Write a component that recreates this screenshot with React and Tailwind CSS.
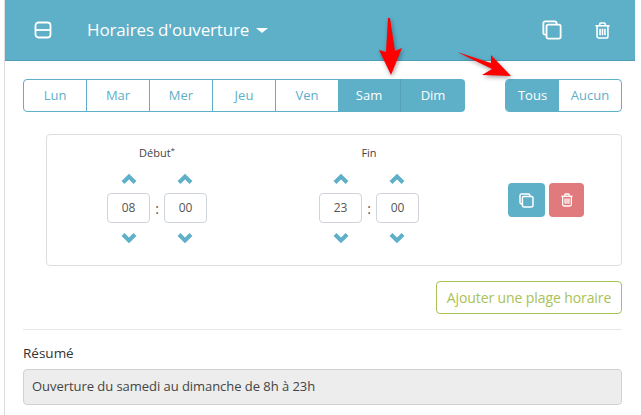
import React from "react"

const teal = "#5eafc8"

function Chevron({ up }) {
  return (
    <svg width="16" height="12" viewBox="0 0 16 12" className="block">
      <path
        d={up ? "M2 9.5 L8 3.5 L14 9.5" : "M2 2.5 L8 8.5 L14 2.5"}
        fill="none"
        stroke={teal}
        strokeWidth="4"
      />
    </svg>
  )
}

function CopyIcon({ size = 20, stroke = 2 }) {
  return (
    <svg width={size} height={size} viewBox="0 0 22 22" fill="none" stroke="#fff" strokeWidth={stroke}>
      <path d="M5 16 H3.5 A2 2 0 0 1 1.5 14 V3.5 A2 2 0 0 1 3.5 1.5 H14 A2 2 0 0 1 16 3.5 V5" />
      <rect x="5" y="5" width="15.5" height="15.5" rx="2" />
    </svg>
  )
}

function TrashIcon({ w = 15, h = 17 }) {
  return (
    <svg width={w} height={h} viewBox="0 0 16 18" fill="none" stroke="#fff" strokeWidth="1.7">
      <path d="M0.5 4 H15.5" />
      <path d="M5 4 V2.2 A1.2 1.2 0 0 1 6.2 1 H9.8 A1.2 1.2 0 0 1 11 2.2 V4" />
      <path d="M2.2 4 V15 A2 2 0 0 0 4.2 17 H11.8 A2 2 0 0 0 13.8 15 V4" />
      <path d="M5.4 7 V14 M8 7 V14 M10.6 7 V14" />
    </svg>
  )
}

function TimeBox({ value }) {
  return (
    <div className="w-[43px] h-[30px] flex items-center justify-center border border-[#cfd4da] rounded-[4px] text-[12px] text-[#555]">
      {value}
    </div>
  )
}

function TimePicker({ label, star, hours, minutes }) {
  return (
    <div className="w-[100px] flex flex-col items-center">
      <div className="h-[18px] text-[11px] leading-[18px] text-[#444]">
        {label}
        {star && <sup className="text-[8px]">*</sup>}
      </div>
      <div className="mt-[11px] w-full flex justify-between px-[14px]">
        <Chevron up />
        <Chevron up />
      </div>
      <div className="mt-[8px] w-full flex items-center justify-between">
        <TimeBox value={hours} />
        <span className="text-[14px] text-[#555]">:</span>
        <TimeBox value={minutes} />
      </div>
      <div className="mt-[9px] w-full flex justify-between px-[14px]">
        <Chevron />
        <Chevron />
      </div>
    </div>
  )
}

export default function App() {
  const days = ["Lun", "Mar", "Mer", "Jeu", "Ven"]

  return (
    <div className="relative w-[641px] h-[415px] overflow-hidden bg-white font-['Open_Sans',sans-serif]">
      <div className="ml-[4px] w-[631px] h-[415px] border-l border-[#dcdcdc]">
        {/* Header */}
        <div className="h-[61px] bg-[#5eafc8] border-b border-[#4f9db6] flex items-center text-white">
          <svg width="18" height="18" viewBox="0 0 18 18" fill="none" stroke="#fff" strokeWidth="1.8" className="ml-[29px]">
            <rect x="1.5" y="1.5" width="15" height="15" rx="3" />
            <path d="M1.5 9 H16.5" />
          </svg>
          <span className="ml-[35px] text-[17px] tracking-[-0.15px]">Horaires d'ouverture</span>
          <span className="ml-[7px] mt-[1px] w-0 h-0 border-x-[6px] border-x-transparent border-t-[5px] border-t-white" />
          <div className="ml-auto mr-[25px] flex items-center gap-[33px]">
            <CopyIcon />
            <TrashIcon />
          </div>
        </div>

        <div className="pl-[18px] pr-[13px]">
          {/* Day selectors */}
          <div className="mt-[18px] flex justify-between">
            <div className="flex w-[442px] h-[33px] text-[13px]">
              {days.map((d, i) => (
                <div
                  key={d}
                  className={`w-[64px] flex items-center justify-center border border-[#5eafc8] text-[#5eafc8] -mr-px ${i === 0 ? "rounded-l-[4px]" : ""}`}
                >
                  {d}
                </div>
              ))}
              <div className="w-[63px] flex items-center justify-center bg-[#5eafc8] border-r border-[#559fb7] text-white text-[13px] font-medium">Sam</div>
              <div className="flex-1 flex items-center justify-center bg-[#5eafc8] rounded-r-[4px] text-white text-[13px] font-medium">Dim</div>
            </div>
            <div className="flex w-[117px] h-[33px] text-[13px] border border-[#5eafc8] rounded-[4px] overflow-hidden">
              <div className="w-[53px] flex items-center justify-center bg-[#5eafc8] text-white text-[13px] font-medium">Tous</div>
              <div className="flex-1 flex items-center justify-center text-[#5eafc8]">Aucun</div>
            </div>
          </div>

          {/* Time range */}
          <div className="mt-[22px] ml-[23px] h-[132px] border border-[#dcdfe2] rounded-[4px] flex pl-[60px] pt-[9px]">
            <TimePicker label="Début" star hours="08" minutes="00" />
            <div className="ml-[112px]">
              <TimePicker label="Fin" hours="23" minutes="00" />
            </div>
            <div className="ml-[89px] mt-[39px] flex gap-[4px] h-[34px]">
              <div className="w-[37px] bg-[#5eafc8] rounded-[4px] flex items-center justify-center">
                <CopyIcon size={15} stroke={2.2} />
              </div>
              <div className="w-[35px] bg-[#e07a7c] rounded-[4px] flex items-center justify-center">
                <TrashIcon w={12} h={14} />
              </div>
            </div>
          </div>

          <div className="mt-[15px] flex justify-end">
            <div className="w-[186px] h-[33px] flex items-center justify-center border border-[#a8c256] rounded-[4px] text-[14px] tracking-[-0.1px] text-[#a8c256]">
              Ajouter une plage horaire
            </div>
          </div>

          <div className="mt-[15px] border-t border-[#e6e6e6]" />

          <div className="mt-[14px] text-[13.5px] leading-[18px] text-[#333]">Résumé</div>
          <div className="mt-[7px] h-[36px] flex items-center px-[8px] bg-[#ecedec] border border-[#cfd2d4] rounded-[4px] text-[13px] tracking-[-0.05px] text-[#444]">
            Ouverture du samedi au dimanche de 8h à 23h
          </div>
        </div>
      </div>

      {/* Red annotation arrows */}
      <svg width="641" height="415" className="absolute top-0 left-0 pointer-events-none drop-shadow-[1px_2px_2px_rgba(0,0,0,0.35)]">
        <polygon points="388,18 390,18 395,51 402,48 391,75 379,50 386,52" fill="#ff0000" />
        <polygon points="457,52 491,63 491,55 511,76 482,75 492,69" fill="#ff0000" />
      </svg>
    </div>
  )
}
